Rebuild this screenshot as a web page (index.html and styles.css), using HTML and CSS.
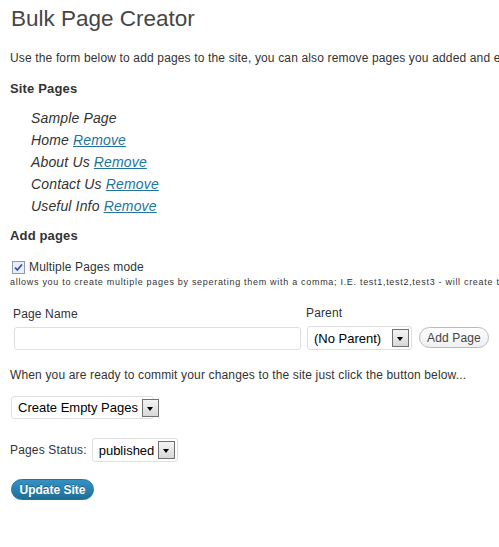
FILE: index.html
```html
<!DOCTYPE html>
<html lang="en">
<head>
    <meta charset="UTF-8">
    <title>Bulk Page Creator</title>
    <link rel="stylesheet" href="styles.css">
</head>
<body>
    <div class="wrap">
        <h1>Bulk Page Creator</h1>

        <p class="intro">Use the form below to add pages to the site, you can also remove pages you added and edit them before committing.</p>

        <h3>Site Pages</h3>
        <ul class="page-list">
            <li>Sample Page</li>
            <li>Home <a href="#">Remove</a></li>
            <li>About Us <a href="#">Remove</a></li>
            <li>Contact Us <a href="#">Remove</a></li>
            <li>Useful Info <a href="#">Remove</a></li>
        </ul>

        <h3 class="add-title">Add pages</h3>
        <div class="check-row">
            <span class="checkbox">
                <svg width="13" height="13" viewBox="0 0 13 13">
                    <rect x="0.5" y="0.5" width="12" height="12" fill="#e9eef6" stroke="#8f9aa6"/>
                    <path d="M3 6.5 L5.3 9 L10 3.5" fill="none" stroke="#3550b0" stroke-width="1.8"/>
                </svg>
            </span>
            <span>Multiple Pages mode</span>
        </div>
        <div class="hint">allows you to create multiple pages by seperating them with a comma; I.E. test1,test2,test3 - will create three pages</div>

        <div class="add-row">
            <div class="field name-field">
                <label>Page Name</label>
                <input type="text" class="text-input">
            </div>
            <div class="field">
                <label>Parent</label>
                <div class="select parent-select">
                    <span class="value">(No Parent)</span>
                    <span class="arrow"></span>
                </div>
            </div>
            <button class="btn-secondary">Add Page</button>
        </div>

        <p class="commit">When you are ready to commit your changes to the site just click the button below...</p>

        <div class="select mode-select">
            <span class="value">Create Empty Pages</span>
            <span class="arrow"></span>
        </div>

        <div class="status-row">
            <span>Pages Status:</span>
            <div class="select status-select">
                <span class="value">published</span>
                <span class="arrow"></span>
            </div>
        </div>

        <button class="btn-primary">Update Site</button>
    </div>
</body>
</html>
```

FILE: styles.css
```css
body {
    font-family: "Liberation Sans", Arial, sans-serif;
    font-size: 12px;
    letter-spacing: 0.15px;
    color: #333;
    background: #fff;
    margin: 0;
    padding: 0;
}
.wrap {
    padding: 0 10px;
    overflow: hidden;
    height: 547px;
}
h1 {
    font-size: 22.5px;
    font-weight: normal;
    letter-spacing: 0;
    line-height: 28px;
    color: #464646;
    margin: 5px 0 0 1px;
}
.intro {
    white-space: nowrap;
    line-height: 18px;
    margin: 16px 0 0 0;
}
h3 {
    font-size: 13px;
    line-height: 18px;
    margin: 13px 0 0 0;
    color: #333;
}
.page-list {
    list-style: none;
    margin: 9px 0 0 0;
    padding: 0 0 0 21px;
    font-size: 14px;
    font-style: italic;
    line-height: 22px;
}
.page-list a {
    color: #21759b;
}
.add-title {
    margin-top: 10px;
}
.check-row {
    display: flex;
    align-items: center;
    gap: 4px;
    margin-top: 14px;
    line-height: 16px;
    padding-left: 2px;
}
.checkbox {
    display: flex;
    width: 13px;
    height: 13px;
}
.hint {
    font-size: 9px;
    letter-spacing: 0.7px;
    line-height: 12px;
    white-space: nowrap;
    margin-top: 1px;
}
.add-row {
    display: flex;
    align-items: flex-end;
    margin-top: 17px;
    padding-left: 3px;
}
.field label {
    display: block;
    line-height: 16px;
    margin-bottom: 5px;
}
.name-field {
    margin-right: 5px;
}
.text-input {
    display: block;
    width: 287px;
    height: 23px;
    box-sizing: border-box;
    margin: 0 0 0 1px;
    border: 1px solid #dfdfdf;
    border-radius: 3px;
    background: #fff;
    padding: 2px 4px;
}
.select {
    display: flex;
    align-items: center;
    justify-content: space-between;
    gap: 4px;
    box-sizing: border-box;
    border: 1px solid #dfdfdf;
    border-radius: 3px;
    background: #fff;
    font-size: 13px;
    letter-spacing: 0;
    color: #000;
    white-space: nowrap;
    padding: 0 2px 0 6px;
}
.select .arrow {
    position: relative;
    flex: none;
    width: 17px;
    height: 18px;
    box-sizing: border-box;
    border: 1px solid #707070;
    background: linear-gradient(#f4f4f4, #d8d8d8);
}
.select .arrow::after {
    content: "";
    position: absolute;
    left: 4px;
    top: 7px;
    border-left: 3.5px solid transparent;
    border-right: 3.5px solid transparent;
    border-top: 4px solid #000;
}
.parent-select {
    width: 105px;
    height: 24px;
    margin-left: 1px;
}
.btn-secondary {
    font-family: "Liberation Sans", Arial, sans-serif;
    font-size: 12px;
    letter-spacing: 0.15px;
    color: #464646;
    height: 21px;
    width: 71px;
    margin: 0 0 2px 7px;
    padding: 0;
    border: 1px solid #bbb;
    border-radius: 11px;
    background: linear-gradient(#fefefe, #f0f0f0);
    cursor: pointer;
}
.commit {
    line-height: 16px;
    margin: 17px 0 0 0;
}
.mode-select {
    width: 143px;
    height: 23px;
    margin: 13px 0 0 1px;
}
.status-row {
    display: flex;
    align-items: center;
    gap: 5px;
    margin-top: 19px;
}
.status-select {
    width: 86px;
    height: 24px;
}
.btn-primary {
    display: block;
    font-family: "Liberation Sans", Arial, sans-serif;
    font-size: 12px;
    font-weight: bold;
    letter-spacing: 0;
    color: #fff;
    width: 83px;
    height: 21px;
    margin: 17px 0 0 1px;
    padding: 0;
    border: 1px solid #21759b;
    border-radius: 11px;
    background: linear-gradient(#3591c3, #1e6f98);
    text-shadow: 0 -1px 0 rgba(0, 0, 0, 0.3);
    cursor: pointer;
}
```
